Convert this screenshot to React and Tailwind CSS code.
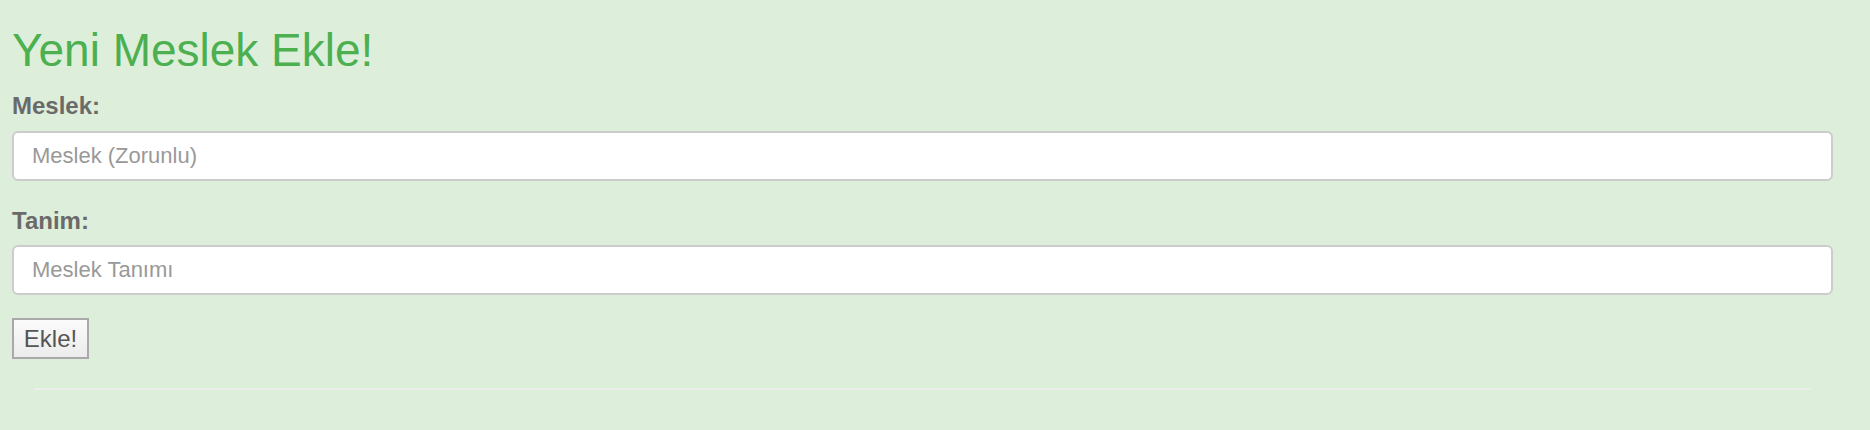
export default function App() {
  return (
    <div className="min-h-[430px] w-full bg-[#ddefdb] pl-[12px] pr-[37px] pt-[25px]" style={{ fontFamily: '"Liberation Sans", Arial, sans-serif' }}>
      <h1 className="h-[50px] text-[46px] leading-[50px] font-normal text-[#4caf50]">Yeni Meslek Ekle!</h1>
      <form className="mt-[17px]" onSubmit={(e) => e.preventDefault()}>
        <label className="block h-[28px] text-[24px] leading-[28px] font-bold text-[#6a6a6a]">Meslek:</label>
        <input
          type="text"
          placeholder="Meslek (Zorunlu)"
          className="mt-[11px] block h-[50px] w-full rounded-[6px] border-2 border-[#cccccc] bg-white px-[18px] text-[22px] text-[#555] placeholder:text-[#999] outline-none"
        />
        <label className="mt-[26px] block h-[28px] text-[24px] leading-[28px] font-bold text-[#6a6a6a]">Tanim:</label>
        <input
          type="text"
          placeholder="Meslek Tanımı"
          className="mt-[10px] block h-[50px] w-full rounded-[6px] border-2 border-[#cccccc] bg-white px-[18px] text-[22px] text-[#555] placeholder:text-[#999] outline-none"
        />
        <button
          type="submit"
          className="mt-[23px] block h-[41px] w-[77px] border-2 border-[#a9a9a9] bg-gradient-to-b from-[#fbfbfb] to-[#ececec] text-[24px] leading-[37px] text-[#555]"
        >
          Ekle!
        </button>
      </form>
      <div className="mx-[22px] mt-[29px] h-[2px] bg-[#ebeeeb]" />
    </div>
  );
}
